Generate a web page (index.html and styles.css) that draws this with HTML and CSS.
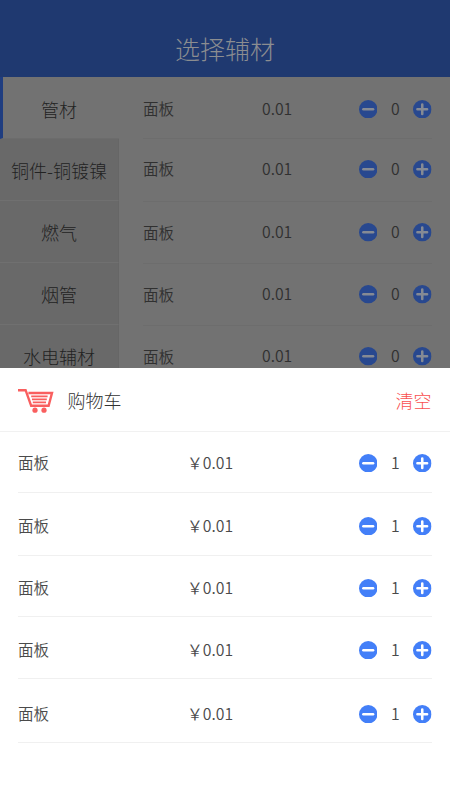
FILE: index.html
```html
<!DOCTYPE html>
<html lang="zh-CN">
<head>
<meta charset="utf-8">
<title>选择辅材</title>
<link rel="stylesheet" href="styles.css">
</head>
<body>
<svg class="defs" width="0" height="0">
  <symbol id="minus" viewBox="0 0 18 18"><circle cx="9" cy="9" r="9" fill="currentColor"/><path d="M4.3 9h9.4" class="mark"/></symbol>
  <symbol id="plus" viewBox="0 0 18 18"><circle cx="9" cy="9" r="9" fill="currentColor"/><path d="M4.3 9h9.4M9 4.3v9.4" class="mark"/></symbol>
</svg>
<div class="app">
  <header class="header"><h1>选择辅材</h1></header>
  <main class="main">
    <nav class="side">
      <div class="cat active">管材</div>
      <div class="cat">铜件-铜镀镍</div>
      <div class="cat">燃气</div>
      <div class="cat">烟管</div>
      <div class="cat">水电辅材</div>
    </nav>
    <section class="goods">
      <div class="row first"><span class="name">面板</span><span class="price">0.01</span><div class="stepper"><svg><use href="#minus"/></svg><span>0</span><svg><use href="#plus"/></svg></div></div>
      <div class="row second"><span class="name">面板</span><span class="price">0.01</span><div class="stepper"><svg><use href="#minus"/></svg><span>0</span><svg><use href="#plus"/></svg></div></div>
      <div class="row"><span class="name">面板</span><span class="price">0.01</span><div class="stepper"><svg><use href="#minus"/></svg><span>0</span><svg><use href="#plus"/></svg></div></div>
      <div class="row"><span class="name">面板</span><span class="price">0.01</span><div class="stepper"><svg><use href="#minus"/></svg><span>0</span><svg><use href="#plus"/></svg></div></div>
      <div class="row"><span class="name">面板</span><span class="price">0.01</span><div class="stepper"><svg><use href="#minus"/></svg><span>0</span><svg><use href="#plus"/></svg></div></div>
    </section>
  </main>
  <section class="cart">
    <div class="cart-head">
      <svg class="cart-icon" viewBox="0 0 36 26" fill="none" stroke="#f95f5f">
        <path d="M0 2.2H7.6L13.2 17.8H30.6L34 5H10.4" stroke-width="2.4"/>
        <path d="M13.2 8.4H29.6M14 11.4H28.8M14.8 14.4H28" stroke-width="1.6"/>
        <circle cx="17" cy="22.2" r="2.6" fill="#f95f5f" stroke="none"/>
        <circle cx="26" cy="22.2" r="2.6" fill="#f95f5f" stroke="none"/>
      </svg>
      <h2>购物车</h2>
      <span class="clear">清空</span>
    </div>
    <div class="row item-1"><span class="name">面板</span><span class="price">￥0.01</span><div class="stepper"><svg><use href="#minus"/></svg><span>1</span><svg><use href="#plus"/></svg></div></div>
    <div class="row item-2"><span class="name">面板</span><span class="price">￥0.01</span><div class="stepper"><svg><use href="#minus"/></svg><span>1</span><svg><use href="#plus"/></svg></div></div>
    <div class="row item-3"><span class="name">面板</span><span class="price">￥0.01</span><div class="stepper"><svg><use href="#minus"/></svg><span>1</span><svg><use href="#plus"/></svg></div></div>
    <div class="row item-4"><span class="name">面板</span><span class="price">￥0.01</span><div class="stepper"><svg><use href="#minus"/></svg><span>1</span><svg><use href="#plus"/></svg></div></div>
    <div class="row item-5"><span class="name">面板</span><span class="price">￥0.01</span><div class="stepper"><svg><use href="#minus"/></svg><span>1</span><svg><use href="#plus"/></svg></div></div>
  </section>
</div>
</body>
</html>
```
FILE: styles.css
```css
* { box-sizing: border-box; }
body { margin: 0; font-family: "Noto Sans CJK SC", sans-serif; font-weight: 350; }
h1, h2 { margin: 0; font-weight: 300; }
.defs { display: block; }
.app { width: 450px; height: 800px; overflow: hidden; display: flex; flex-direction: column; background: #727272; }
.header { height: 77px; flex: none; background: #1f3970; display: flex; justify-content: center; align-items: flex-end; }
.header h1 { font-size: 25px; line-height: 36px; height: 47px; color: #8b8d90; }
.main { height: 291px; flex: none; display: flex; overflow: hidden; color: #303030; }
.side { width: 119px; flex: none; font-weight: 300; color: #222; }
.cat { height: 62px; padding-top: 1px; border-bottom: 1px solid #707070; background: #696969; border-right: 1px solid #666; display: flex; align-items: center; justify-content: center; font-size: 18px; white-space: nowrap; }
.cat.active { height: 62px; padding: 2px 4px 0 0; background: #727272; border-left: 3px solid #1f3d80; border-right: 0; border-bottom: 1px solid #6c6c6c; border-top: 0; }
.goods { flex: 1; padding: 0 18px 0 24px; }
.row { height: 62px; flex: none; display: flex; align-items: center; border-bottom: 1px solid #6d6d6d; font-size: 15.5px; }
.row.first { padding-top: 3px; }
.row.second { height: 63px; padding-bottom: 2px; }
.name { width: 119px; margin-bottom: 2px; }
.price { flex: 1; font-size: 15.8px; margin-bottom: 1.5px; }
.stepper { width: 73px; margin-right: 0.5px; display: flex; align-items: center; justify-content: space-between; color: #28488f; }
.stepper svg { width: 18.5px; height: 18.5px; display: block; }
.stepper span { font-size: 15.8px; color: #303030; margin: 0 0 1.5px 0.5px; }
.mark { stroke: var(--mark, #858a94); stroke-width: 2.5; stroke-linecap: round; fill: none; }
.cart { flex: 1; background: #fff; color: #4a4a4a; }
.cart-head { height: 64px; padding: 3px 18.5px 0 18px; border-bottom: 1px solid #f1f1f1; display: flex; align-items: center; }
.cart-icon { width: 36px; height: 26px; margin-right: 14px; }
.cart-head h2 { flex: 1; font-size: 18px; margin: 0 0 2px -0.5px; color: #333; }
.clear { font-size: 18px; font-weight: 300; color: #f95050; margin-bottom: 2px; }
.cart .row { margin: 0 18px; border-color: #f0f0f0; }
.cart .name { width: 169px; }
.cart .stepper { --mark: #fff; color: #437ff8; }
.cart .stepper span { color: #4a4a4a; }
.cart .item-1 { height: 61px; padding-top: 2px; }
.cart .item-2 { height: 63px; padding-top: 4px; }
.cart .item-3 { height: 61px; padding-top: 4px; }
.cart .item-4 { height: 62px; padding-top: 5px; }
.cart .item-5 { height: 64px; padding-top: 7px; }
```
